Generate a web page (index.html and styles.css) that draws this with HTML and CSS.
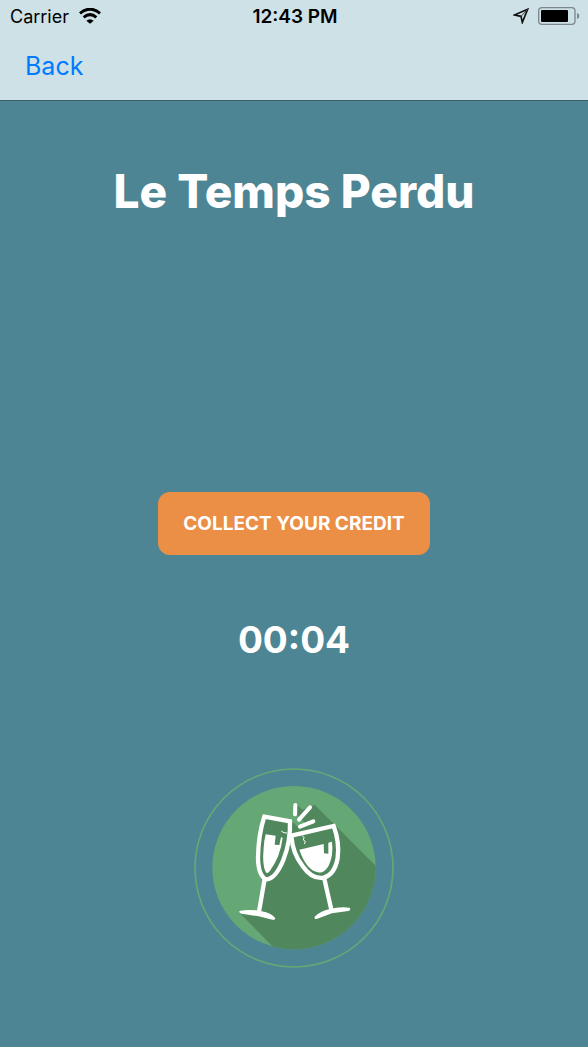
FILE: index.html
```html
<!DOCTYPE html>
<html lang="en">
<head>
<meta charset="utf-8">
<meta name="viewport" content="width=device-width, initial-scale=1">
<title>Le Temps Perdu</title>
<link rel="stylesheet" href="styles.css">
</head>
<body>
<header class="top">
  <div class="status">
    <div class="status-left">
      <span class="carrier">Carrier</span>
      <svg class="wifi" viewBox="0 0 66 48" aria-hidden="true">
        <path d="M3 16Q33-9 63 16" fill="none" stroke="#000" stroke-width="9"/>
        <path d="M14 28Q33 12 52 28" fill="none" stroke="#000" stroke-width="9"/>
        <path d="M22 38Q33 29 44 38L33 47Z"/>
      </svg>
    </div>
    <time class="clock">12:43 PM</time>
    <div class="status-right">
      <svg class="locate" viewBox="0 0 48 48" aria-hidden="true">
        <path d="M44 4L4 21L24 25L28 43Z" fill="none" stroke="#111" stroke-width="5"/>
        <path d="M44 4L24 25" stroke="#444" stroke-width="3"/>
      </svg>
      <svg class="battery" viewBox="0 0 126 54" aria-hidden="true">
        <rect x="2" y="2" width="109" height="50" rx="10" fill="none" stroke="#7d888c" stroke-width="4"/>
        <rect x="9" y="9" width="81" height="36" rx="3"/>
        <path d="M117 18Q124 20 124 27T117 36Z" fill="#7d888c"/>
      </svg>
    </div>
  </div>
  <nav class="nav"><a class="back" href="#">Back</a></nav>
</header>
<main class="content">
  <h1 class="title">Le Temps Perdu</h1>
  <button class="collect" type="button">COLLECT YOUR CREDIT</button>
  <p class="timer" role="timer">00:04</p>
  <svg class="badge" viewBox="0 0 624 624" role="img" aria-label="Clinking glasses">
    <defs><clipPath id="disc"><circle cx="312" cy="311" r="245"/></clipPath></defs>
    <circle cx="312" cy="312" r="297" fill="none" stroke="#66a875" stroke-width="5"/>
    <circle cx="312" cy="311" r="245" fill="#66a875"/>
    <path clip-path="url(#disc)" fill="#51875d" d="M148 446L208 440L226 345Q203 330 202 285Q202 215 222 155L305 171L324 190L345 176L322 154V122L337 137L360 130L374 122L600 348V624H323Z"/>
    <g fill="none" stroke="#fff" stroke-linecap="round" stroke-linejoin="round">
      <path stroke-width="12" d="M316 123L315 151M360 130L327 167M370 172L330 188"/>
      <path stroke-width="13" stroke-linejoin="miter" d="M223 158L300 172Q302 232 280 288Q256 346 228 346Q205 335 204 282Q205 212 223 158Z"/>
      <path stroke-width="13" stroke-linejoin="miter" d="M304 215L431 186Q449 234 443 282Q434 332 401 341Q366 347 337 305Q308 269 304 215Z"/>
      <path stroke-width="13" stroke-linecap="butt" d="M224 345L207 443M402 340L424 437"/>
      <path stroke-width="3" d="M275 202L282 206L290 207M337 215L342 220L340 228L346 232L344 239"/>
    </g>
    <g fill="#fff">
      <path d="M227 211L257 215L254 242L268 243L273 220L278 221Q271 278 240 320Q232 332 227 324Q216 302 221 251Q222 231 227 211Z"/>
      <path d="M328 257L401 240L402 268L415 269V236L426 233Q431 274 416 305Q402 329 384 325Q349 318 328 257Z"/>
      <path d="M148 441Q181 434 215 442Q244 447 256 463Q255 469 247 467L206 457L155 449Q147 447 148 441Z"/>
      <path d="M374 458Q390 442 420 435Q449 427 479 431Q484 438 475 441L426 448L380 465Q372 466 374 458Z"/>
    </g>
  </svg>
</main>
</body>
</html>
```
FILE: styles.css
```css
* {
  box-sizing: border-box;
}

body {
  margin: 0;
  min-height: 100vh;
  background: #4d8594;
  color: #fff;
  font-family: Inter, "Liberation Sans", sans-serif;
}

.top {
  background: #cde1e7;
  border-bottom: 1px solid #365f6a;
}

.status {
  display: grid;
  grid-template-columns: 1fr auto 1fr;
  align-items: center;
  height: 32px;
  padding: 0 8px 0 10px;
  color: #000;
  font-size: 18px;
}

.status-left,
.status-right {
  display: flex;
  align-items: center;
}

.status-left {
  gap: 10px;
}

.status-right {
  justify-content: flex-end;
  gap: 9px;
}

.clock {
  font-size: 19px;
  font-weight: 600;
}

.wifi {
  width: 22px;
  height: 16px;
}

.locate {
  width: 16px;
  height: 16px;
}

.battery {
  width: 42px;
  height: 18px;
}

.nav {
  display: flex;
  padding: 18px 25px 16px;
}

.back {
  color: #007aff;
  font-size: 25px;
  line-height: 32px;
  text-decoration: none;
}

.nav .back {
  margin-bottom: 2px;
}

.content {
  display: flex;
  flex-direction: column;
  align-items: center;
  padding: 62px 24px 72px;
}

.title {
  margin: 0 0 273px;
  font-size: 46px;
  font-weight: 800;
  line-height: 56px;
}

.collect {
  padding: 20px 25px;
  border: 0;
  border-radius: 12px;
  background: #eb8f46;
  color: #fff;
  font: 700 19px/23px Inter, "Liberation Sans", sans-serif;
}

.timer {
  margin: 61px 0 100px;
  font-size: 37px;
  font-weight: 700;
  line-height: 48px;
}

.badge {
  width: 208px;
  height: 208px;
}
```
